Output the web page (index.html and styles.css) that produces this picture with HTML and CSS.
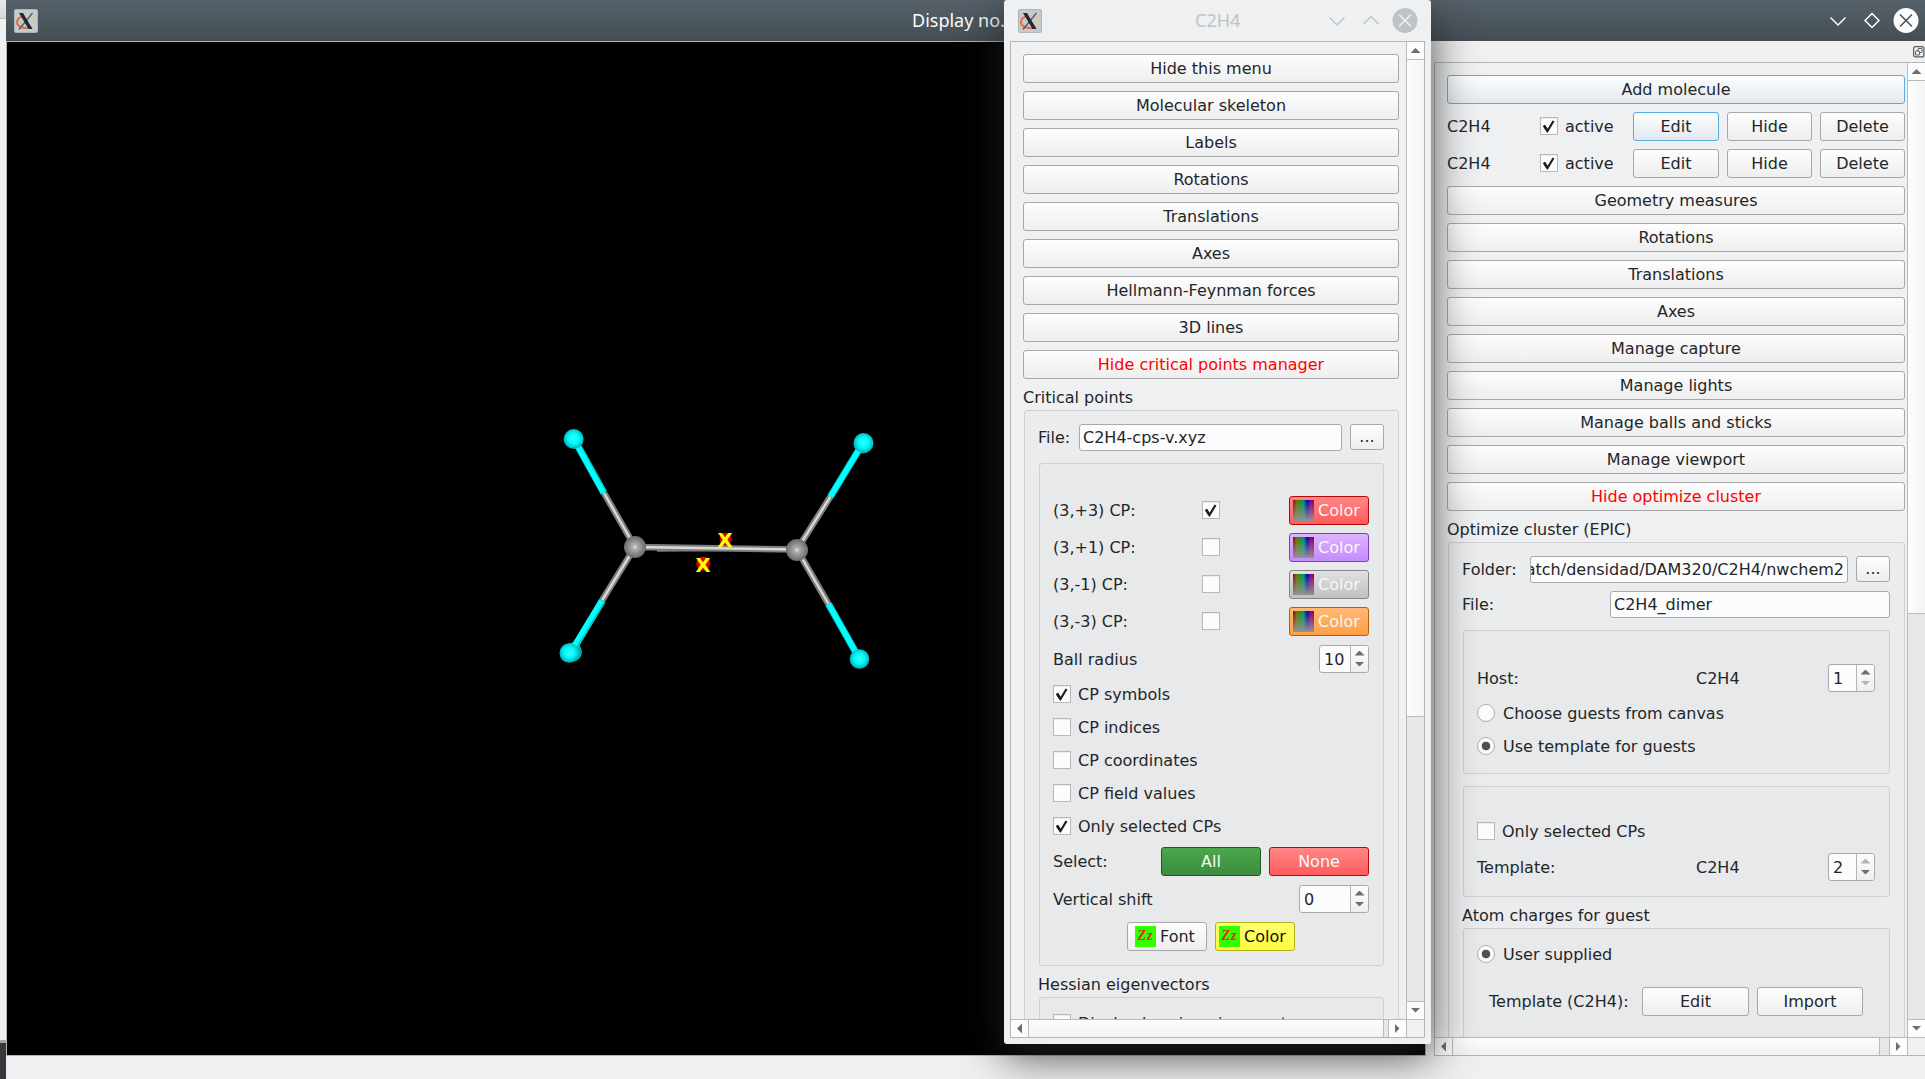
FILE: index.html
```html
<!DOCTYPE html>
<html lang="en">
<head>
<meta charset="utf-8">
<title>Display</title>
<link rel="stylesheet" href="styles.css">
</head>
<body>
<svg class="defs" width="0" height="0">
  <defs>
    <symbol id="xorg" viewBox="0 0 24 24">
      <rect x="0.5" y="0.5" width="23" height="23" rx="1.5" fill="#c3cbcf" stroke="#aeb6ba"/>
      <path d="M7 20h9l2-3-4 2z" fill="#aab0b5"/>
      <path d="M8.500 7C3 9 1.500 13.500 4.500 16.500C7 19 12 19.500 17.500 18.500" fill="none" stroke="#ee6830" stroke-width="1.800"/>
      <path d="M15.500 7.500C21 9 23 13 19.500 16.500" fill="none" stroke="#e6c68e" stroke-width="1.500"/>
      <path d="M18.500 4L5 20.500" stroke="#55595c" stroke-width="1.300"/>
      <path d="M5 4h4l9.500 16h-4z" fill="#26282b"/>
    </symbol>
    <symbol id="tick" viewBox="0 0 18 18"><path d="M4 8.500L7.500 14L13.500 4" fill="none" stroke="#1b1e20" stroke-width="2.200"/><path d="M4 8.500L7.500 14" stroke="#1b1e20" stroke-width="2.600"/></symbol>
    <radialGradient id="carbon" cx=".5" cy=".5" r=".5"><stop offset="0" stop-color="#e8e8e8"/><stop offset=".2" stop-color="#b0b0b0"/><stop offset=".6" stop-color="#8c8c8c"/><stop offset="1" stop-color="#6a6a6a"/></radialGradient>
    <radialGradient id="hydrogen" cx=".5" cy=".47" r=".5"><stop offset="0" stop-color="#30ffff"/><stop offset=".55" stop-color="#00fafa"/><stop offset="1" stop-color="#00b4b8"/></radialGradient>
  </defs>
</svg>
<div class="desktop">
  <div class="behind"><div class="behind-tab"></div><div class="behind-body"></div><div class="behind-dark"></div></div>
  <main class="main-window">
    <header class="main-title">
      <svg class="app-icon" width="24" height="24"><use href="#xorg"/></svg>
      <span class="main-caption">Display no.</span>
      <svg class="window-controls" width="89" height="26" viewBox="0 0 89 26" fill="none" stroke="#fcfcfc" stroke-width="1.500">
        <path d="M.5 9.500l7.500 7.500 7.500-7.500"/><path d="M42 5.500l7 7-7 7-7-7z"/><circle cx="76" cy="12.500" r="12.500" fill="#fcfcfc" stroke="none"/><path d="M70 6.500l12 12m0-12l-12 12" stroke="#475057"/>
      </svg>
    </header>
    <div class="workspace">
      <div class="canvas">
        <svg width="1418" height="1013" viewBox="7 42 1418 1013">
          <g fill="none" stroke-width="6.500" stroke="#7e7e7e">
            <path d="M604 493L635 547L602 600.500"/><path d="M830.500 496.500L797 549.500L828.500 604"/>
            <path d="M635 547L797 549.500"/><path d="M657 549.500L775 548.500" stroke-width="4.500"/>
          </g>
          <path d="M604 493L635 547L602 600.500M830.500 496.500L797 549.500L828.500 604M635 547L797 549.500" fill="none" stroke="#d8d8d8" stroke-width="2.400"/>
          <circle cx="572.500" cy="652" r="9.500" fill="#00b0b4"/>
          <circle cx="863" cy="444.500" r="9" fill="#00a8ac"/>
          <path d="M604 493L574 439M830.500 496.500L863 443M602.500 600.500L571 653M828.500 604L859.500 659" stroke="#00cdd0" stroke-width="7"/>
          <path d="M603.500 493L573.500 439M830.500 496.500L863 443M601.500 600.500L569.500 653M828.500 604L859.500 659" stroke="#0ff" stroke-width="5"/>
          <g fill="url(#carbon)"><circle cx="635" cy="547" r="11"/><circle cx="797" cy="550" r="11"/></g>
          <g fill="url(#hydrogen)"><circle cx="573.700" cy="439" r="10"/><circle cx="863.500" cy="443" r="10"/><circle cx="569.300" cy="653" r="9.800"/><circle cx="859.500" cy="659" r="9.800"/></g>
          <circle cx="725.500" cy="539" r="6" fill="#d80000"/><circle cx="703.300" cy="563.500" r="7" fill="#e00000"/>
          <g class="cp-mark" text-anchor="middle"><text x="725" y="547">X</text><text x="703" y="572">X</text></g>
        </svg>
      </div>
      <aside class="dock">
        <div class="dock-bar">
          <svg width="12" height="12" viewBox="0 0 12 12" fill="none" stroke="#55595c"><rect x=".6" y=".6" width="10.300" height="10.300" rx="2" stroke-width="1.200"/><rect x="5" y="2.500" width="4" height="4" rx=".5"/><rect x="2.500" y="5" width="4" height="4" rx=".5" fill="#eff0f1"/></svg>
        </div>
        <div class="scroll-frame dock-frame">
          <div class="viewport dock-view">
            <button class="btn focus">Add molecule</button>
            <div class="mol-row"><span>C2H4</span><span class="box"><svg><use href="#tick"/></svg></span><span>active</span><button class="btn focus">Edit</button><button class="btn">Hide</button><button class="btn">Delete</button></div>
            <div class="mol-row"><span>C2H4</span><span class="box"><svg><use href="#tick"/></svg></span><span>active</span><button class="btn">Edit</button><button class="btn">Hide</button><button class="btn">Delete</button></div>
            <button class="btn">Geometry measures</button>
            <button class="btn">Rotations</button>
            <button class="btn">Translations</button>
            <button class="btn">Axes</button>
            <button class="btn">Manage capture</button>
            <button class="btn">Manage lights</button>
            <button class="btn">Manage balls and sticks</button>
            <button class="btn">Manage viewport</button>
            <button class="btn alert">Hide optimize cluster</button>
            <section class="section">
              <h2 class="heading">Optimize cluster (EPIC)</h2>
              <div class="group outer">
                <div class="file-row"><span class="folder-label">Folder:</span><span class="field folder">atch/densidad/DAM320/C2H4/nwchem2</span><button class="btn dots">...</button></div>
                <div class="file-row second"><span class="name-label">File:</span><span class="field">C2H4_dimer</span></div>
                <div class="group inner host">
                  <div class="spin-row"><span>Host:</span><span>C2H4</span><span class="spin w47"><b>1</b><i><u class="up"></u><u class="down off"></u></i></span></div>
                  <div class="check-row r1"><span class="radio"></span>Choose guests from canvas</div>
                  <div class="check-row r2"><span class="radio on"></span>Use template for guests</div>
                </div>
                <div class="group inner template">
                  <div class="check-row tight"><span class="box"></span>Only selected CPs</div>
                  <div class="spin-row"><span>Template:</span><span>C2H4</span><span class="spin w47"><b>2</b><i><u class="up off"></u><u class="down"></u></i></span></div>
                </div>
                <h2 class="heading inset">Atom charges for guest</h2>
                <div class="group inner charges">
                  <div class="check-row"><span class="radio on"></span>User supplied</div>
                  <div class="import-row"><span>Template (C2H4):</span><button class="btn">Edit</button><button class="btn">Import</button></div>
                </div>
              </div>
            </section>
          </div>
          <div class="vbar"><div class="sb top"><u class="up"></u></div><div class="thumb dock-v"></div><div class="sb bottom"><u class="down"></u></div></div>
          <div class="hbar"><div class="sb left"><u class="lt"></u></div><div class="thumb dock-h"></div><div class="sb right"><u class="rt"></u></div></div>
          <div class="corner"></div>
        </div>
      </aside>
    </div>
  </main>
</div>

<div class="popup">
  <header class="popup-title">
    <svg class="app-icon" width="24" height="24"><use href="#xorg"/></svg>
    <span class="popup-caption">C2H4</span>
    <svg class="window-controls" width="90" height="26" viewBox="0 0 90 26" fill="none" stroke="#bdc3c7" stroke-width="1.500">
      <path d="M.5 9.500l7.500 7.500 7.500-7.500M34.500 16l7.500-7.500 7.500 7.500"/><circle cx="76" cy="12.500" r="12.500" fill="#bdc3c7" stroke="none"/><path d="M70 6.500l12 12m0-12l-12 12" stroke="#eff0f1"/>
    </svg>
  </header>
  <div class="scroll-frame popup-frame">
    <div class="viewport popup-view">
      <button class="btn">Hide this menu</button>
      <button class="btn">Molecular skeleton</button>
      <button class="btn">Labels</button>
      <button class="btn">Rotations</button>
      <button class="btn">Translations</button>
      <button class="btn">Axes</button>
      <button class="btn">Hellmann-Feynman forces</button>
      <button class="btn">3D lines</button>
      <button class="btn alert">Hide critical points manager</button>
      <section class="section">
        <h2 class="heading">Critical points</h2>
        <div class="group outer">
          <div class="file-row"><span class="cp-file">File:</span><span class="field">C2H4-cps-v.xyz</span><button class="btn dots">...</button></div>
          <div class="group inner points">
            <div class="cp-rows">
              <div class="cp-row"><span>(3,+3) CP:</span><span class="box"><svg><use href="#tick"/></svg></span><button class="btn tint red"><em class="spectrum"></em>Color</button></div>
              <div class="cp-row"><span>(3,+1) CP:</span><span class="box"></span><button class="btn tint violet"><em class="spectrum"></em>Color</button></div>
              <div class="cp-row"><span>(3,-1) CP:</span><span class="box"></span><button class="btn tint silver"><em class="spectrum"></em>Color</button></div>
              <div class="cp-row"><span>(3,-3) CP:</span><span class="box"></span><button class="btn tint orange"><em class="spectrum"></em>Color</button></div>
            </div>
            <div class="spin-row"><span>Ball radius</span><span class="spin w50"><b>10</b><i><u class="up"></u><u class="down"></u></i></span></div>
            <div class="checks">
              <div class="check-row"><span class="box"><svg><use href="#tick"/></svg></span>CP symbols</div>
              <div class="check-row"><span class="box"></span>CP indices</div>
              <div class="check-row"><span class="box"></span>CP coordinates</div>
              <div class="check-row"><span class="box"></span>CP field values</div>
              <div class="check-row"><span class="box"><svg><use href="#tick"/></svg></span>Only selected CPs</div>
            </div>
            <div class="select-row"><span>Select:</span><button class="btn green">All</button><button class="btn red">None</button></div>
            <div class="spin-row"><span>Vertical shift</span><span class="spin w70"><b>0</b><i><u class="up"></u><u class="down"></u></i></span></div>
            <div class="font-row"><button class="btn font-btn"><em class="zz">Zz</em>Font</button><button class="btn tint yellow"><em class="zz">Zz</em>Color</button></div>
          </div>
          <h2 class="heading inset">Hessian eigenvectors</h2>
          <div class="group inner hessian"><div class="check-row"><span class="box"></span>Display hessian eigenvectors</div></div>
        </div>
      </section>
    </div>
    <div class="vbar"><div class="sb top"><u class="up"></u></div><div class="thumb popup-v"></div><div class="sb bottom"><u class="down"></u></div></div>
    <div class="hbar"><div class="sb left"><u class="lt"></u></div><div class="thumb popup-h"></div><div class="sb right"><u class="rt"></u></div></div>
    <div class="corner"></div>
  </div>
</div>
</body>
</html>
```
FILE: styles.css
```css
* { box-sizing: border-box; }
body {
  margin: 0; width: 1925px; height: 1079px; overflow: hidden; position: relative;
  background: #eff0f1; color: #232629;
  font: 16px/20px "DejaVu Sans", sans-serif; white-space: nowrap;
}
.defs { position: absolute; }
svg { display: block; flex: none; }
.desktop { display: flex; height: 1079px; }

.behind { width: 6px; display: flex; flex-direction: column; }
.behind-tab { height: 19px; background: linear-gradient(#e9eaeb, #d6d7d9); border-bottom: 1px solid #bfc0c2; }
.behind-body { flex: 1; background: #eff0f2; }
.behind-dark { height: 39px; background: #36383c; border-top: 3px solid #a3a4a6; }

.main-window { flex: 1; display: flex; flex-direction: column; min-width: 0; }
.main-title {
  height: 41px; display: flex; align-items: center; padding: 0 6px 0 8px;
  background: linear-gradient(#56616a, #475057 85%, #454c54);
}
.main-caption { margin: -2px auto 0 874px; color: #fcfcfc; font: 18px/24px "Noto Sans", sans-serif; }
.main-title .window-controls { margin-right: 0; }
.workspace { height: 1015px; display: flex; }
.canvas { width: 1420px; height: 1015px; background: #000; border: 1px solid #b4b5b7; margin-right: 8px; }
.cp-mark { font: bold 19.5px "DejaVu Sans", sans-serif; fill: #ff0; }

.dock { flex: 1; display: flex; flex-direction: column; min-width: 0; }
.dock-bar { height: 21px; display: flex; justify-content: flex-end; padding: 5px 0 0; }

.scroll-frame { display: grid; grid-template-columns: minmax(0, 1fr) 18px; grid-template-rows: minmax(0, 1fr) 18px; border: 1px solid #b4b5b7; }
.dock-frame { height: 994px; border-right: 0; }
.viewport { overflow: hidden; display: flex; flex-direction: column; gap: 8px; }
.viewport > * { flex: none; }
.dock-view { padding: 12px 2px 0 12px; }
.popup-view { padding: 12px 7px 0 12px; }

.vbar { display: flex; flex-direction: column; justify-content: space-between; background: #e6e7e7; border-left: 1px solid #b9babb; }
.hbar { display: flex; justify-content: space-between; background: #e6e7e7; border-top: 1px solid #b9babb; }
.corner { border: 0 solid #b9babb; border-width: 1px 0 0 1px; }
.sb { flex: none; display: flex; align-items: center; justify-content: center; border: 0 solid #b9babb; background: #fcfcfc; }
.vbar .sb { height: 18px; }
.hbar .sb { width: 18px; }
.sb.top { border-bottom-width: 1px; }
.sb.bottom { border-top-width: 1px; padding-bottom: 1px; }
.sb.left { border-right-width: 1px; }
.sb.right { border-left-width: 1px; padding-right: 1px; }
.thumb { flex: none; border: 0 solid #b9babb; }
.vbar .thumb { border-bottom-width: 1px; background: linear-gradient(90deg, #fdfdfd, #f4f4f4); margin-bottom: auto; }
.hbar .thumb { border-right-width: 1px; background: linear-gradient(#fdfdfd, #f2f2f2); margin-right: auto; }
.dock-v { height: 533px; }
.dock-h { width: 427px; }
.popup-v { height: 657px; }
.popup-h { width: 355px; }
u { display: block; background: #6c6e6f; }
u.up, u.down { width: 10px; height: 5px; clip-path: polygon(50% 0, 100% 100%, 0 100%); }
u.down { clip-path: polygon(0 0, 100% 0, 50% 100%); }
u.lt, u.rt { width: 5px; height: 10px; clip-path: polygon(100% 0, 100% 100%, 0 50%); }
u.rt { clip-path: polygon(0 0, 100% 50%, 0 100%); }
u.off { background: #b3b4b5; }

.btn {
  display: flex; align-items: center; justify-content: center; height: 29px; padding: 1px 0 0; flex: none;
  font: inherit; color: inherit; border: 1px solid #a7a8a9; border-radius: 3px;
  background: linear-gradient(#fdfdfd, #eeeeee);
}
.focus { border-color: #58ade0; background: linear-gradient(#fcfdfe, #e2e9ee); }
.alert { color: #f00; }
.dots { width: 34px; height: 26px; margin-bottom: 1px; padding: 0; }
.red, .violet, .silver, .orange, .green { color: #f8f8f8; }
.red { border-color: #b60a0a; background: linear-gradient(#ff8787, #ff5c5c); }
.violet { border-color: #7b41b4; background: linear-gradient(#dcb5ff, #c58aff); }
.silver { border-color: #858585; background: linear-gradient(#e0e0e0, #c0c0c0); }
.orange { border-color: #b95d0c; background: linear-gradient(#ffb976, #ff9f46); }
.green { border-color: #1c5a1f; background: linear-gradient(#4aa84c, #3b8c3d); }
.yellow { border-color: #b6b114; background: linear-gradient(#ffff70, #fcfc40); color: #111; }
.spectrum, .zz { flex: none; width: 21px; height: 21px; margin: -1px 4px 0 0; }
.spectrum { background: linear-gradient(transparent, #929292), linear-gradient(90deg, #90000c, #7d6a00 18%, #00a010 36%, #009090 50%, #0000a0 68%, #900090 86%, #98001c); }
.zz { background: #3f0; color: #dc2a20; font: italic bold 14px/20px "Liberation Serif", serif; text-align: center; letter-spacing: 1px; }
.tint { justify-content: flex-start; padding-left: 3px; }
.font-btn { justify-content: flex-start; padding-left: 7px; }

.mol-row { display: grid; grid-template-columns: 85px 17px 60px 86px 85px 85px; column-gap: 8px; align-items: center; height: 29px; }
.box {
  display: block; flex: none; width: 18px; height: 18px; background: #fcfcfc; border: 1px solid #b7b8b9;
  box-shadow: inset 0 1px #ececec;
}
.mol-row .box, .cp-row .box { margin-bottom: 1px; }
.box svg { width: 18px; height: 18px; margin: -1px; }
.radio { flex: none; width: 18px; height: 18px; border-radius: 50%; border: 1px solid #adaeaf; background: #fcfcfc; }
.radio.on { background: radial-gradient(circle, #505355 0 4px, #fcfcfc 4.700px); }

.heading { margin: 0; height: 31px; padding-top: 9px; font: inherit; }
.inset { margin-left: -1px; }
.section { margin-top: -8px; }
.group { border: 1px solid #cdcfd0; border-radius: 3px; }
.outer { margin-left: 1px; height: 700px; padding: 13px 14px 0; background: #ebecee; }
.inner { margin-top: 12px; background: #e8e9ea; padding: 0 14px 0 13px; }
.heading + .inner { margin-top: 0; }

.file-row { display: flex; align-items: center; gap: 8px; height: 27px; }
.file-row.second { margin-top: 8px; }
.folder-label, .name-label { width: 60px; margin-left: -1px; }
.name-label { width: 140px; }
.cp-file { width: 33px; margin-left: -1px; }
.field {
  flex: 1; min-width: 0; height: 27px; padding: 3px 3px 0; overflow: hidden; line-height: 20px;
  background: #fcfcfc; border: 1px solid #a9aaab; border-radius: 3px;
}
.folder { display: flex; justify-content: flex-end; padding-left: 0; }

.spin-row { display: flex; align-items: center; height: 28px; }
.spin-row > span:not(.spin) { padding-top: 2px; }
.spin { margin-left: auto; height: 28px; display: flex; border: 1px solid #a9aaab; border-radius: 3px; background: #fcfcfc; overflow: hidden; }
.spin b { flex: 1; font-weight: normal; padding: 4px 0 0 4px; }
.spin i { width: 18px; border-left: 1px solid #b3b4b5; background: linear-gradient(#fdfdfd, #efefef); display: flex; flex-direction: column; align-items: center; justify-content: center; gap: 6px; padding-bottom: 1px; }
.w47 { width: 47px; }
.w50 { width: 50px; }
.w70 { width: 70px; }
.host .spin-row, .template .spin-row { display: grid; grid-template-columns: 219px 1fr auto; }
.check-row { display: flex; align-items: flex-start; gap: 8px; height: 18px; }
.popup .check-row, .tight { gap: 7px; }

.host { height: 144px; padding-top: 33px; }
.r1 { margin-top: 12px; }
.r2 { margin-top: 15px; }
.template { height: 111px; padding-top: 35px; }
.template .spin-row { margin-top: 13px; }
.charges { height: 300px; padding-top: 16px; }
.import-row { display: grid; grid-template-columns: 145px 107px 106px; column-gap: 8px; align-items: center; margin: 24px 0 0 12px; }

.points { height: 503px; padding-top: 32px; }
.cp-rows { display: flex; flex-direction: column; gap: 8px; margin-bottom: 9px; }
.cp-row { display: grid; grid-template-columns: 149px 87px 80px; align-items: center; height: 29px; }
.checks { display: flex; flex-direction: column; gap: 15px; margin: 12px 0; }
.select-row { display: grid; grid-template-columns: 100px 100px 100px; column-gap: 8px; align-items: center; margin-bottom: 9px; }
.font-row { display: grid; grid-template-columns: 80px 80px; column-gap: 8px; margin: 9px 0 0 74px; }
.hessian { height: 80px; padding-top: 16px; }

.popup {
  position: absolute; left: 1004px; top: 0; width: 427px; height: 1044px; padding: 0 6px;
  background: #eff0f1; border-radius: 3px;
  box-shadow: 0 12px 44px rgba(32, 35, 38, .8);
}
.popup-title { height: 41px; display: flex; align-items: center; padding: 0 6px 0 8px; }
.popup-caption { margin: -2px 0 0 153px; color: #bdc3c7; font: 18px/24px "Noto Sans", sans-serif; }
.popup-title .window-controls { margin-left: auto; }
.popup-frame { width: 415px; height: 997px; }
```
